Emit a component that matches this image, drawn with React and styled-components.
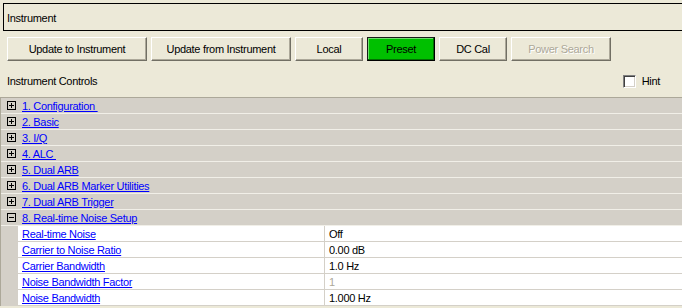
import React from "react";
import styled, { createGlobalStyle, css } from "styled-components";

const GlobalStyle = createGlobalStyle`
  body {
    margin: 0;
    background: #ece9d8;
    font-family: "Liberation Sans", Arial, sans-serif;
    font-size: 11px;
    color: #000;
  }
`;

const Page = styled.div`
  width: 682px;
  height: 308px;
  overflow: hidden;
  background: #ece9d8;
  letter-spacing: -0.3px;
`;

const GroupBox = styled.div`
  margin: 3px 0 0 3px;
  height: 24px;
  border: 1px solid #000;
  border-right: none;
  display: flex;
  align-items: center;
  padding: 2px 0 0 3px;
`;

const ButtonRow = styled.div`
  display: flex;
  gap: 4px;
  margin-top: 6px;
  padding-left: 7px;
`;

const Button = styled.button`
  width: ${(props) => props.w}px;
  height: 24px;
  padding: 0;
  font: inherit;
  letter-spacing: inherit;
  color: #000;
  background: #ece9d8;
  border: 1px solid;
  border-color: #fff #716f64 #716f64 #fff;
  box-shadow: inset -1px -1px 0 #aca899;
  ${(props) =>
    props.primary &&
    css`
      background: #00c000;
      border-color: #1a1a1a #000 #000 #1a1a1a;
      box-shadow: inset -1px -1px 0 #007000, inset 1px 1px 0 #6fdc6f;
    `}
  ${(props) =>
    props.disabled &&
    css`
      color: #aca899;
      text-shadow: 1px 1px 0 #fff;
    `}
`;

const ControlsHeader = styled.div`
  height: 36px;
  display: flex;
  align-items: center;
  justify-content: space-between;
  padding: 4px 22px 0 7px;
  box-sizing: border-box;
`;

const HintLabel = styled.label`
  display: flex;
  align-items: center;
  gap: 6px;
`;

const CheckBox = styled.span`
  width: 13px;
  height: 13px;
  box-sizing: border-box;
  background: #fff;
  border: 1px solid;
  border-color: #808080 #fff #fff #808080;
  box-shadow: inset 1px 1px 0 #404040, inset -1px -1px 0 #d4d0c8;
`;

const Tree = styled.div`
  background: #d4d0c8;
  border-top: 1px solid #aca899;
  border-left: 1px solid #aca899;
`;

const Row = styled.div`
  height: 15px;
  display: flex;
  align-items: center;
  border-bottom: 1px solid #f1efe8;
`;

const Toggle = styled.span`
  position: relative;
  width: 9px;
  height: 9px;
  box-sizing: border-box;
  border: 1px solid #000;
  margin: 0 6px 0 6px;
  flex: none;
  &::before {
    content: "";
    position: absolute;
    left: 1px;
    top: 3px;
    width: 5px;
    height: 1px;
    background: #000;
  }
  ${(props) =>
    !props.open &&
    css`
      &::after {
        content: "";
        position: absolute;
        left: 3px;
        top: 1px;
        width: 1px;
        height: 5px;
        background: #000;
      }
    `}
`;

const Link = styled.a`
  color: #0000ff;
  text-decoration: underline;
  white-space: pre;
  cursor: pointer;
`;

const Children = styled.div`
  padding-left: 17px;
`;

const PropRow = styled.div`
  height: 15px;
  display: grid;
  grid-template-columns: 307px 1fr;
  background: #fff;
  border-bottom: 1px solid #d4d0c8;
`;

const NameCell = styled.div`
  display: flex;
  align-items: center;
  padding-left: 4px;
  border-right: 1px solid #d4d0c8;
`;

const ValueCell = styled.div`
  display: flex;
  align-items: center;
  padding-left: 4px;
  color: ${(props) => (props.dim ? "#aca899" : "#000")};
`;

const sections = [
  "1. Configuration ",
  "2. Basic",
  "3. I/Q",
  "4. ALC ",
  "5. Dual ARB",
  "6. Dual ARB Marker Utilities",
  "7. Dual ARB Trigger",
];

const props = [
  ["Real-time Noise", "Off"],
  ["Carrier to Noise Ratio", "0.00 dB"],
  ["Carrier Bandwidth", "1.0 Hz"],
  ["Noise Bandwidth Factor", "1", true],
  ["Noise Bandwidth", "1.000 Hz"],
];

export default function App() {
  return (
    <Page>
      <GlobalStyle />
      <GroupBox>Instrument</GroupBox>
      <ButtonRow>
        <Button w={140}>Update to Instrument</Button>
        <Button w={140}>Update from Instrument</Button>
        <Button w={68}>Local</Button>
        <Button w={68} primary>
          Preset
        </Button>
        <Button w={68}>DC Cal</Button>
        <Button w={100} disabled>
          Power Search
        </Button>
      </ButtonRow>
      <ControlsHeader>
        <span>Instrument Controls</span>
        <HintLabel>
          <CheckBox />
          Hint
        </HintLabel>
      </ControlsHeader>
      <Tree>
        {sections.map((s) => (
          <Row key={s}>
            <Toggle />
            <Link>{s}</Link>
          </Row>
        ))}
        <Row>
          <Toggle open />
          <Link>8. Real-time Noise Setup</Link>
        </Row>
        <Children>
          {props.map(([name, value, dim]) => (
            <PropRow key={name}>
              <NameCell>
                <Link>{name}</Link>
              </NameCell>
              <ValueCell dim={dim}>{value}</ValueCell>
            </PropRow>
          ))}
        </Children>
      </Tree>
    </Page>
  );
}
